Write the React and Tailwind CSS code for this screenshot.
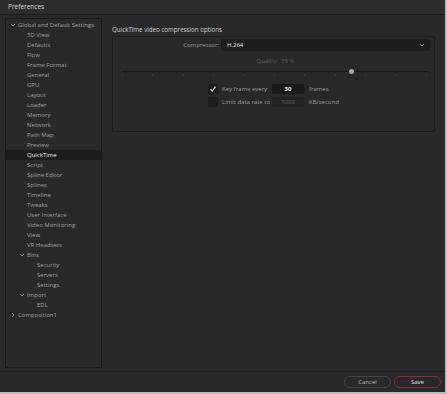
import React from "react";

const tree = [
  { label: "Global and Default Settings", level: 0, chevron: "open" },
  { label: "3D View", level: 1 },
  { label: "Defaults", level: 1 },
  { label: "Flow", level: 1 },
  { label: "Frame Format", level: 1 },
  { label: "General", level: 1 },
  { label: "GPU", level: 1 },
  { label: "Layout", level: 1 },
  { label: "Loader", level: 1 },
  { label: "Memory", level: 1 },
  { label: "Network", level: 1 },
  { label: "Path Map", level: 1 },
  { label: "Preview", level: 1 },
  { label: "QuickTime", level: 1, selected: true },
  { label: "Script", level: 1 },
  { label: "Spline Editor", level: 1 },
  { label: "Splines", level: 1 },
  { label: "Timeline", level: 1 },
  { label: "Tweaks", level: 1 },
  { label: "User Interface", level: 1 },
  { label: "Video Monitoring", level: 1 },
  { label: "View", level: 1 },
  { label: "VR Headsets", level: 1 },
  { label: "Bins", level: 1, chevron: "open" },
  { label: "Security", level: 2 },
  { label: "Servers", level: 2 },
  { label: "Settings", level: 2 },
  { label: "Import", level: 1, chevron: "open" },
  { label: "EDL", level: 2 },
  { label: "Composition1", level: 0, chevron: "closed" },
];

const indent = ["pl-[12px]", "pl-[21px]", "pl-[31px]"];

function Chevron({ open }) {
  return (
    <svg width="6" height="6" viewBox="0 0 6 6" className="shrink-0">
      {open ? (
        <path d="M1 2 L3 4 L5 2" stroke="#8e8e92" strokeWidth="0.8" fill="none" />
      ) : (
        <path d="M2 1 L4 3 L2 5" stroke="#8e8e92" strokeWidth="0.8" fill="none" />
      )}
    </svg>
  );
}

function TreeRow({ item }) {
  return (
    <div
      className={
        "relative h-[10px] flex items-center whitespace-nowrap " +
        indent[item.level] +
        (item.selected ? " bg-[#1c1c20] text-[#ececec]" : " text-[#a2a2a6]")
      }
    >
      {item.chevron && (
        <span className="absolute top-[2px]" style={{ left: item.level * 9 + 4 }}>
          <Chevron open={item.chevron === "open"} />
        </span>
      )}
      {item.label}
    </div>
  );
}

function Ticks() {
  const ticks = [];
  for (let i = 0; i <= 10; i++) ticks.push(i);
  return (
    <div className="flex justify-between px-[1px] h-[3px]">
      {ticks.map((t) => (
        <div key={t} className="w-px h-[2px] bg-[#38383e]" />
      ))}
    </div>
  );
}

export default function App() {
  return (
    <div className="w-[447px] h-[394px] bg-[#bcbcbc] font-['Open_Sans',sans-serif] text-[6px] leading-[10px]">
      <div className="w-[445px] h-[392px] bg-[#28282d] flex flex-col">
        <div className="h-[15px] shrink-0 bg-[#2c2c31] border-b border-[#1c1c20] flex items-center pl-[8px] text-[#d8d8d8] text-[6.5px]">
          Preferences
        </div>
        <div className="flex flex-1 pl-[5px] pt-[3px]">
          <div className="w-[97px] h-[350px] border border-[#1a1a1e] bg-[#28282d] pt-[1px]">
            {tree.map((item) => (
              <TreeRow key={item.label} item={item} />
            ))}
          </div>
          <div className="flex-1 pl-[10px] pr-[10px]">
            <div className="h-[18px] flex items-end pb-[1px] text-[6.2px] text-[#cfcfd2]">
              QuickTime video compression options
            </div>
            <div className="h-[96px] border border-[#1c1c20] rounded-[1px] pt-[2px]">
              <div className="flex items-center h-[12px]">
                <div className="w-[108px] text-right pr-[2px] text-[#9c9ca0]">Compressor:</div>
                <div className="flex-1 mr-[4px] h-[12px] bg-[#1d1d21] rounded-[2px] flex items-center justify-between pl-[6px] pr-[5px] text-[#e8e8e8]">
                  <span>H.264</span>
                  <Chevron open />
                </div>
              </div>
              <div className="text-center text-[#5e5e63] mt-[5px] h-[10px] pl-[4px]">
                Quality:&nbsp;&nbsp;75 %
              </div>
              <div className="ml-[8px] mr-[6px] mt-[5px]">
                <div className="relative h-[1px] bg-[#161619]">
                  <div className="absolute left-[74.4%] top-[-2px] w-[5px] h-[5px] rounded-full bg-[#a4a4a8]" />
                </div>
                <div className="mt-[2px]">
                  <Ticks />
                </div>
              </div>
              <div className="flex items-center h-[10px] mt-[7px] pl-[95px] whitespace-nowrap">
                <div className="w-[10px] h-[10px] bg-[#1c1c20] rounded-[1px] flex items-center justify-center">
                  <svg width="8" height="8" viewBox="0 0 8 8">
                    <path d="M1.5 4.2 L3.2 6 L6.6 1.6" stroke="#e4e4e4" strokeWidth="1.2" fill="none" />
                  </svg>
                </div>
                <span className="ml-[4px] w-[50px] text-[#9c9ca0]">Key frame every</span>
                <div className="w-[32px] h-[10px] bg-[#1a1a1e] rounded-[1px] text-center text-[#f2f2f2] font-bold">30</div>
                <span className="ml-[5px] text-[#9c9ca0]">frames</span>
              </div>
              <div className="flex items-center h-[10px] mt-[3px] pl-[95px] whitespace-nowrap">
                <div className="w-[10px] h-[10px] bg-[#1c1c20] rounded-[1px]" />
                <span className="ml-[4px] w-[50px] text-[#9c9ca0]">Limit data rate to</span>
                <div className="w-[32px] h-[10px] bg-[#222226] rounded-[1px] text-center text-[#646468]">1000</div>
                <span className="ml-[5px] text-[#9c9ca0]">KB/second</span>
              </div>
            </div>
          </div>
        </div>
        <div className="h-[21px] shrink-0 border-t border-[#1f1f23] flex items-center justify-end gap-[3px] pr-[4px]">
          <div className="w-[47px] h-[12px] rounded-full border border-[#45454b] flex items-center justify-center text-[#bcbcc0]">
            Cancel
          </div>
          <div className="w-[47px] h-[12px] rounded-full border border-[#922c33] flex items-center justify-center text-[#e4e4e4]">
            Save
          </div>
        </div>
      </div>
    </div>
  );
}
